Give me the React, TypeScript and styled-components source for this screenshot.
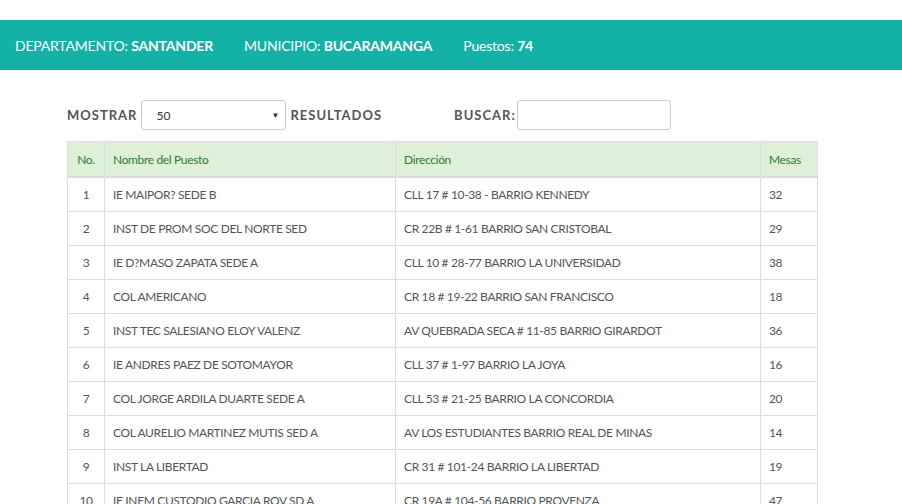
import styled, { createGlobalStyle } from "styled-components";

const Global = createGlobalStyle`
  html { overflow-y: scroll; }
  body { margin: 0; font-family: Lato, "Open Sans", sans-serif; color: #555; background: #fff; }
`;

const Header = styled.div`
  margin-top: 20px;
  height: 50px;
  background: #14b1a7;
  color: #fff;
  display: flex;
  align-items: center;
  gap: 31px;
  padding-left: 15px;
  font-size: 14px;
  letter-spacing: -0.2px;
  b { font-weight: 700; }
`;

const Content = styled.div`
  padding: 30px 0 0 67px;
  width: 750px;
`;

const Controls = styled.div`
  display: flex;
  align-items: center;
  height: 30px;
  margin-bottom: 11px;
`;

const Label = styled.span<{ $gap?: number }>`
  font-size: 13px;
  font-weight: 700;
  letter-spacing: 1px;
  color: #555;
  margin-left: ${(p) => p.$gap ?? 0}px;
`;

const Select = styled.div`
  width: 145px;
  height: 30px;
  box-sizing: border-box;
  border: 1px solid #ccc;
  border-radius: 3px;
  margin: 0 4px 0 4px;
  display: flex;
  align-items: center;
  justify-content: space-between;
  padding: 0 6px 0 14px;
  font-size: 12px;
  color: #333;
  span { font-size: 8px; }
`;

const Input = styled.div`
  width: 154px;
  height: 30px;
  box-sizing: border-box;
  border: 1px solid #ccc;
  border-radius: 3px;
  margin-left: 1px;
`;

const Table = styled.table`
  border-collapse: collapse;
  table-layout: fixed;
  width: 750px;
  font-size: 12px;
  letter-spacing: -0.35px;
`;

const Th = styled.th<{ $center?: boolean }>`
  height: 34px;
  background: #dff0d8;
  color: #2e7d32;
  font-weight: 400;
  text-align: ${(p) => (p.$center ? "center" : "left")};
  padding: 0 8px;
  border: 1px solid #ddd;
  border-bottom: 2px solid #ddd;
`;

const Td = styled.td<{ $center?: boolean }>`
  height: 33px;
  padding: 0 8px;
  border: 1px solid #ddd;
  color: #555;
  white-space: nowrap;
  text-align: ${(p) => (p.$center ? "center" : "left")};
`;

const rows = [
  ["IE MAIPOR? SEDE B", "CLL 17 # 10-38 - BARRIO KENNEDY", "32"],
  ["INST DE PROM SOC DEL NORTE SED", "CR 22B # 1-61 BARRIO SAN CRISTOBAL", "29"],
  ["IE D?MASO ZAPATA SEDE A", "CLL 10 # 28-77 BARRIO LA UNIVERSIDAD", "38"],
  ["COL AMERICANO", "CR 18 # 19-22 BARRIO SAN FRANCISCO", "18"],
  ["INST TEC SALESIANO ELOY VALENZ", "AV QUEBRADA SECA # 11-85 BARRIO GIRARDOT", "36"],
  ["IE ANDRES PAEZ DE SOTOMAYOR", "CLL 37 # 1-97 BARRIO LA JOYA", "16"],
  ["COL JORGE ARDILA DUARTE SEDE A", "CLL 53 # 21-25 BARRIO LA CONCORDIA", "20"],
  ["COL AURELIO MARTINEZ MUTIS SED A", "AV LOS ESTUDIANTES BARRIO REAL DE MINAS", "14"],
  ["INST LA LIBERTAD", "CR 31 # 101-24 BARRIO LA LIBERTAD", "19"],
  ["IE INEM CUSTODIO GARCIA ROV SD A", "CR 19A # 104-56 BARRIO PROVENZA", "47"],
];

export default function App() {
  return (
    <>
      <Global />
      <Header>
        <span>DEPARTAMENTO: <b>SANTANDER</b></span>
        <span>MUNICIPIO: <b>BUCARAMANGA</b></span>
        <span>Puestos: <b>74</b></span>
      </Header>
      <Content>
        <Controls>
          <Label>MOSTRAR</Label>
          <Select>50<span>▼</span></Select>
          <Label>RESULTADOS</Label>
          <Label $gap={72}>BUSCAR:</Label>
          <Input />
        </Controls>
        <Table>
          <colgroup>
            <col style={{ width: 37 }} />
            <col style={{ width: 291 }} />
            <col style={{ width: 365 }} />
            <col style={{ width: 57 }} />
          </colgroup>
          <thead>
            <tr>
              <Th $center>No.</Th>
              <Th>Nombre del Puesto</Th>
              <Th>Dirección</Th>
              <Th>Mesas</Th>
            </tr>
          </thead>
          <tbody>
            {rows.map((r, i) => (
              <tr key={i}>
                <Td $center>{i + 1}</Td>
                <Td>{r[0]}</Td>
                <Td>{r[1]}</Td>
                <Td>{r[2]}</Td>
              </tr>
            ))}
          </tbody>
        </Table>
      </Content>
    </>
  );
}
